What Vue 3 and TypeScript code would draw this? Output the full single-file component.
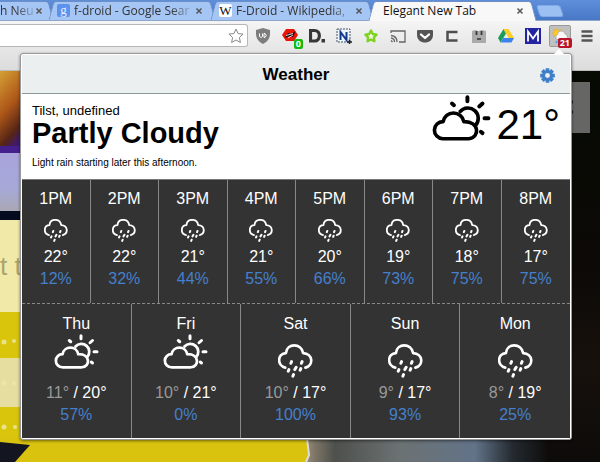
<script setup lang="ts">
interface Hour { time: string; temp: number; rain: number }
interface Day { name: string; low: number; high: number; rain: number; icon: 'sun' | 'rain' }

const tabs = [
  { title: 'h Neu', icon: '', kind: 'first' },
  { title: 'f-droid - Google Sear', icon: 'g', kind: 'google' },
  { title: 'F-Droid - Wikipedia,', icon: 'W', kind: 'wiki' },
  { title: 'Elegant New Tab', icon: '', kind: 'active' },
]
const hours: Hour[] = [
  { time: '1PM', temp: 22, rain: 12 },
  { time: '2PM', temp: 22, rain: 32 },
  { time: '3PM', temp: 21, rain: 44 },
  { time: '4PM', temp: 21, rain: 55 },
  { time: '5PM', temp: 20, rain: 66 },
  { time: '6PM', temp: 19, rain: 73 },
  { time: '7PM', temp: 18, rain: 75 },
  { time: '8PM', temp: 17, rain: 75 },
]
const days: Day[] = [
  { name: 'Thu', low: 11, high: 20, rain: 57, icon: 'sun' },
  { name: 'Fri', low: 10, high: 21, rain: 0, icon: 'sun' },
  { name: 'Sat', low: 10, high: 17, rain: 100, icon: 'rain' },
  { name: 'Sun', low: 9, high: 17, rain: 93, icon: 'rain' },
  { name: 'Mon', low: 8, high: 19, rain: 25, icon: 'rain' },
]
</script>

<template>
  <div class="browser">
    <svg width="0" height="0" class="defs" aria-hidden="true">
      <symbol id="sun" viewBox="98 134 178 140">
        <g fill="none" stroke="currentColor" stroke-width="11" stroke-linecap="round" stroke-linejoin="round">
          <path d="M130 267A26 26 0 0 1 131 215A32 32 0 0 1 194 215C242 213 244 264 209 267Z" />
          <path d="M183 184A31 31 0 0 1 230 226" />
          <path d="M205 141V153M158 160L164 165M241 169L251 160M257 205H269M246 246L251 250" stroke-width="12" />
        </g>
      </symbol>
      <symbol id="rain" viewBox="84 134 106 102">
        <g fill="none" stroke="currentColor" stroke-width="8" stroke-linecap="round" stroke-linejoin="round">
          <path d="M106 205C80 199 82 162 108 161C111 130 155 130 160 161C190 162 193 198 167 205" />
          <path d="M125 187L123 192M157 187L155 192M139 204L135 211M117 211L115 216M153 208L151 213M131 226L129 231" stroke-width="9" />
        </g>
      </symbol>
    </svg>

    <nav class="tabs" aria-label="Tabs">
      <div v-for="t in tabs" :key="t.kind" class="tab" :class="t.kind">
        <span v-if="t.icon" class="fav">{{ t.icon }}</span>
        <span class="title">{{ t.title }}</span>
        <button class="close" :aria-label="'Close ' + t.title">
          <svg viewBox="0 0 8 8"><path d="M1.500 1.500L6.500 6.500M6.500 1.500L1.500 6.500" stroke="#555" stroke-width="1.500" /></svg>
        </button>
      </div>
      <button class="newtab" aria-label="New tab"></button>
    </nav>

    <div class="toolbar">
      <div class="omnibox">
        <input aria-label="Address" />
        <button aria-label="Bookmark">
          <svg viewBox="0 0 16 16"><path d="M8 1l2.100 4.600 5 .5-3.700 3.400 1 5L8 12l-4.400 2.500 1-5L.9 6.100l5-.5z" fill="#fff" stroke="#888" /></svg>
        </button>
      </div>
      <div class="exts">
        <button aria-label="Shield">
          <svg viewBox="0 0 16 16"><path d="M8 0l7 2c.5 7-1 11-7 14C2 13 .5 9 1 2z" fill="#7d7d7d" /><path d="M4.500 5.500v3q1.500 2 3 0v-3M9 5.500v4h1q2.500-2 0-4z" fill="none" stroke="#fff" /></svg>
        </button>
        <button aria-label="Blocker" class="badged">
          <svg viewBox="0 0 16 16"><path d="M4 1h8l4 6-4 6H4L0 7z" fill="#ea1408" /><path d="M2.500 10L6 5l3 1 4.500-3-2.500 6-3-1z" fill="#111" /><path d="M4 7.500l7-2M6 10l5-3" stroke="#fff" stroke-width=".8" /></svg>
          <span class="badge green">0</span>
        </button>
        <button aria-label="Disconnect">
          <svg viewBox="0 0 16 16"><path d="M1.500 2.500h4c6.500 0 6.500 10.500 0 10.500h-4z" fill="none" stroke="#383838" stroke-width="3.200" /><rect x="12.500" y="11" width="3.500" height="3.500" fill="#383838" /></svg>
        </button>
        <button aria-label="Notes" class="note">
          <svg viewBox="0 0 16 16"><path d="M1 1h13v13H1z" fill="#eef4fb" stroke="#456" stroke-dasharray="2 1" /><path d="M4.500 12V4l6 8V4" fill="none" stroke="#123a8c" stroke-width="2" /><path d="M11 14h5M13.500 11.500v5" stroke="#222" stroke-width="1.500" /></svg>
        </button>
        <button aria-label="Favorites">
          <svg viewBox="0 0 16 16"><path d="M8 2.500l1.800 3.500 3.800.6-2.700 2.700.5 3.900L8 11.500l-3.400 1.700.5-3.900-2.700-2.700L6.200 6z" fill="#eef7dc" stroke="#7ed321" stroke-width="2.400" stroke-linejoin="round" /></svg>
        </button>
        <button aria-label="Cast">
          <svg viewBox="0 0 16 16" fill="none" stroke="#666" stroke-width="1.300"><path d="M1 5V3h14v11H9M1 7.500q6 .5 6 6.500M1 10q3.500.5 3.500 4M1 12.500l1.500 1.500" /></svg>
        </button>
        <button aria-label="Pocket">
          <svg viewBox="0 0 16 16"><path d="M0 3q0-1 1-1h14q1 0 1 1v4c0 10-16 10-16 0z" fill="#555" /><path d="M4 6.500l4 3.500 4-3.500" fill="none" stroke="#fff" stroke-width="2.300" stroke-linecap="round" stroke-linejoin="round" /></svg>
        </button>
        <button aria-label="Clipper">
          <svg viewBox="0 0 16 16"><path d="M13.500 4H3.500v8.500h10" fill="none" stroke="#4e4e4e" stroke-width="2.500" /></svg>
        </button>
        <button aria-label="Face">
          <svg viewBox="0 0 16 16"><path d="M1 3l3-1 3 1 4-1 4 1v12H1z" fill="#aaa" /><path d="M5.500 3v4M10.500 3v4M6 11h4" stroke="#333" stroke-width="1.700" /></svg>
        </button>
        <button aria-label="Drive">
          <svg viewBox="0 0 16 16"><path d="M5.500 1L0 10l2.500 4.500L8 5.500z" fill="#199e58" /><path d="M5.500 1h5L16 10h-5.200z" fill="#fbcd20" /><path d="M5.300 10H16l-2.500 4.500h-11z" fill="#3e82ed" /></svg>
        </button>
        <button aria-label="Mail">
          <svg viewBox="0 0 16 16"><path d="M0 0h16v16H0z" fill="#2424a0" /><path d="M3 13.500V3.500l5 7 5-7v10" fill="none" stroke="#fff" stroke-width="1.800" /></svg>
        </button>
        <button aria-label="Weather" class="badged pressed">
          <svg viewBox="0 0 16 16"><path d="M5 0v10M0 5h10M1.500 1.500l7 7M8.500 1.500l-7 7" stroke="#f3b010" stroke-width="1.200" /><circle cx="5" cy="5" r="3" fill="#fbc92a" /><path d="M5 11.500a3 3 0 0 1 .5-5 3.800 3.800 0 0 1 7.500-.5 3 3 0 0 1 1 5.500z" fill="#f8f8f8" stroke="#999" stroke-width=".6" /><path d="M5 13l-1 2" stroke="#48a5e8" stroke-width="2" /></svg>
          <span class="badge red">21</span>
        </button>
        <button aria-label="Menu">
          <svg viewBox="0 0 16 16"><path d="M2.500 3.500h11M2.500 8h11M2.500 12.500h11" stroke="#555" stroke-width="2.300" /></svg>
        </button>
      </div>
    </div>

    <main class="page">
      <svg class="photo" viewBox="0 71 600 391" preserveAspectRatio="xMinYMin slice" aria-hidden="true">
        <defs>
          <linearGradient id="or" x1="0" y1="0" x2=".3" y2="1"><stop offset="0" stop-color="#d5a035" /><stop offset=".5" stop-color="#ae5718" /><stop offset=".85" stop-color="#552515" /><stop offset="1" stop-color="#401a68" /></linearGradient>
          <linearGradient id="lav" x1="0" y1="0" x2="0" y2="1"><stop offset="0" stop-color="#a9a4dc" /><stop offset=".6" stop-color="#a6a9d8" /><stop offset="1" stop-color="#aaa8b4" /></linearGradient>
          <linearGradient id="floor"><stop offset="0" stop-color="#b09c80" /><stop offset=".06" stop-color="#7d7566" /><stop offset=".14" stop-color="#4d504c" /><stop offset=".4" stop-color="#6c7273" /><stop offset=".7" stop-color="#627388" /><stop offset=".85" stop-color="#242a30" /><stop offset="1" stop-color="#0d0b09" /></linearGradient>
          <linearGradient id="dark" x1="0" y1="0" x2="0" y2="1"><stop offset="0" stop-color="#060a03" /><stop offset=".5" stop-color="#0c0906" /><stop offset=".75" stop-color="#17110d" /><stop offset="1" stop-color="#0d0b09" /></linearGradient>
        </defs>
        <path d="M0 71H600V462H0z" fill="url(#dark)" />
        <path d="M0 71H22V154H0z" fill="url(#or)" />
        <path d="M0 146H22V154H0z" fill="#44208c" />
        <path d="M0 153H22V211H0z" fill="url(#lav)" />
        <path d="M0 211H22V220H0z" fill="#050c20" />
        <path d="M0 220H22V312H0z" fill="#f1e9a8" />
        <path d="M0 312H22V462H0z" fill="#d8c50c" />
        <path d="M0 358H22V407H0z" fill="#e5dea0" />
        <path d="M300 430H550V462H300z" fill="url(#floor)" />
        <path d="M0 438H307L309 455L305 462H0z" fill="#d9c30e" />
        <path d="M307 438L309 455L306 462" fill="none" stroke="#d9dce0" stroke-width="2" />
        <path d="M0 442L30 445L15 462H0z" fill="#131521" />
        <path d="M570 82H590V133H570z" fill="#666764" />
        <circle cx="571" cy="102" r="2" fill="#111" /><circle cx="571" cy="112" r="2" fill="#111" />
        <text x="0" y="275" font-size="26" font-family="Liberation Sans, sans-serif" fill="#aaa56c">t t</text>
        <g fill="#efe9a8" opacity=".8"><circle cx="4" cy="342" r="2.500" /><circle cx="14" cy="341" r="2" /><circle cx="4" cy="383" r="2.500" /><circle cx="14" cy="383" r="2" /><circle cx="4" cy="427" r="2.500" /><circle cx="15" cy="427" r="2" /></g>
      </svg>
    </main>

    <section class="popup">
      <header class="head">
        <h1>Weather</h1>
        <button class="gear" aria-label="Settings">
          <svg viewBox="-8 -8 16 16"><g stroke="#3f7fc8" stroke-width="4"><path d="M0-7.800V7.800M-7.800 0H7.800M-5.500-5.500L5.500 5.500M5.500-5.500L-5.500 5.500" /></g><circle r="5.500" fill="#3f7fc8" /><circle r="2.600" fill="#ebeff0" /></svg>
        </button>
      </header>
      <div class="current">
        <div class="summary">
          <p class="place">Tilst, undefined</p>
          <h2>Partly Cloudy</h2>
          <p class="outlook">Light rain starting later this afternoon.</p>
        </div>
        <div class="now">
          <svg class="nowicon"><use href="#sun" /></svg>
          <span>21°</span>
        </div>
      </div>
      <div class="row hourly">
        <div v-for="h in hours" :key="h.time" class="cell">
          <span>{{ h.time }}</span>
          <div class="icon"><svg><use href="#rain" /></svg></div>
          <span>{{ h.temp }}°</span>
          <span class="chance">{{ h.rain }}%</span>
        </div>
      </div>
      <div class="row daily">
        <div v-for="d in days" :key="d.name" class="cell">
          <span>{{ d.name }}</span>
          <div class="icon" :class="d.icon"><svg><use :href="'#' + d.icon" /></svg></div>
          <span><span class="low">{{ d.low }}°</span> / {{ d.high }}°</span>
          <span class="chance">{{ d.rain }}%</span>
        </div>
      </div>
    </section>
  </div>
</template>

<style>
body { margin: 0; }
</style>

<style scoped>
* { box-sizing: border-box; }
.browser { position: relative; display: flex; flex-direction: column; min-height: 100vh; overflow: hidden; font-family: "Liberation Sans", Arial, sans-serif; }
.defs { position: absolute; }
button { border: 0; padding: 0; background: none; display: block; font: inherit; }
svg { display: block; }
h1, h2, p { margin: 0; }

.tabs { display: flex; height: 21px; background: linear-gradient(#5f8fda, #4877c6); border-bottom: 1px solid #8ea6c8; }
.tab { position: relative; display: flex; align-items: center; gap: 4px; min-width: 0; height: 21px; padding: 0 10px 0 6px; font: 12px/20px "Open Sans", "Noto Sans", sans-serif; color: #333; isolation: isolate; }
.tab::before, .tab::after { content: ""; position: absolute; top: 1px; bottom: 1px; z-index: -1; background: #a5c6f4; border: 0 solid #6d8fc4; border-top-width: 1px; }
.tab::before { left: 0; right: 50%; border-left-width: 1px; border-top-left-radius: 3px; transform: skewX(-15deg); }
.tab::after { left: 40%; right: 0; border-right-width: 1px; border-top-right-radius: 3px; transform: skewX(15deg); }
.first { flex: 0 0 51px; gap: 0; padding-left: 0; padding-right: 8px; }
.first::before { left: -10px; }
.google { flex: 0 0 162px; }
.wiki { flex: 0 0 158px; padding-right: 8px; }
.active { flex: 0 0 163px; padding-left: 12px; color: #111; }
.active::before, .active::after { background: #f8f8f8; bottom: 0; }
.title { flex: 1; min-width: 0; white-space: nowrap; }
.tab:not(.active) .title { mask-image: linear-gradient(90deg, #000 calc(100% - 20px), rgba(0, 0, 0, .15)); }
.fav { width: 13px; height: 13px; border-radius: 2px; background: #5b93ec; color: #e8f0ff; font: 13px/11px "Liberation Serif", serif; text-align: center; }
.wiki .fav { background: #fff; color: #111; line-height: 14px; }
.close svg { width: 8px; height: 8px; }
.newtab { width: 24px; height: 12px; margin: 5px 0 0 4px; border: 1px solid #7fabe8; border-radius: 3px; background: #9dc0f2; transform: skewX(18deg); }

.toolbar { display: flex; align-items: center; height: 50px; padding-bottom: 21px; background: linear-gradient(#f4f4f4, #dcdcdc); border-bottom: 1px solid #bbb; }
.omnibox { flex: 1; min-width: 0; display: flex; align-items: center; height: 23px; margin-top: 1px; border: 1px solid #b6b6b6; border-left: 0; border-radius: 0 3px 3px 0; background: #fff; }
.omnibox input { flex: 1; min-width: 0; border: 0; background: none; }
.omnibox svg { width: 16px; height: 16px; margin-right: 3px; }
.exts { display: flex; align-items: center; gap: 5px; padding: 1px 2px 0 4px; }
.exts button { position: relative; display: grid; place-items: center; width: 22px; height: 22px; }
.exts svg { width: 16px; height: 16px; }
.exts .pressed { border: 1px solid #999; border-radius: 2px; background: #c0c0c0; }
.badge { position: absolute; right: -2px; bottom: -2px; padding: 0 2px; border-radius: 2px; font: bold 9px/10px "Open Sans", sans-serif; color: #fff; }
.green { background: #14b814; }
.red { background: #b8142c; }

.page { position: relative; flex: 1; background: #0a0a07; }
.photo { position: absolute; inset: 0; width: 100%; height: 100%; }

.popup { position: absolute; top: 53px; left: 20px; right: 28px; border: 1px solid #999; border-radius: 3px; padding: 1px; background: #fff; box-shadow: 0 1px 3px rgba(0, 0, 0, .5); color: #000; }
.popup::before { content: ""; position: absolute; top: -5px; right: 6px; border: 6px solid transparent; border-top: 0; border-bottom-color: #fff; }
.head { display: grid; grid-template-columns: 1fr auto 1fr; align-items: center; height: 39px; padding-top: 2px; background: #ebeff0; border-bottom: 1px solid #8f9898; }
h1 { grid-column: 2; font-size: 17px; line-height: 20px; }
.gear { justify-self: end; margin-right: 15px; }
.gear svg { width: 15px; height: 15px; }
.current { display: flex; justify-content: space-between; height: 85px; padding: 0 10px; }
.summary { padding-top: 9px; }
.place { font-size: 13px; line-height: 16px; }
h2 { font-size: 29px; line-height: 28px; }
.outlook { font-size: 10px; line-height: 12px; margin-top: 10px; }
.now { display: flex; gap: 5px; font-size: 42px; line-height: 48px; }
.now span { padding-top: 7px; }
.nowicon { width: 59px; height: 46px; margin-top: 1px; }
.row { display: grid; background: #333; color: #fff; font-size: 16px; line-height: 22px; text-align: center; }
.hourly { grid-template-columns: repeat(8, 1fr); border-top: 1px solid #777; border-bottom: 1px dashed #888; }
.daily { grid-template-columns: repeat(5, 1fr); }
.cell { display: flex; flex-direction: column; padding: 8px 0 13px; border-right: 1px solid #888; }
.daily .cell { padding: 9px 0 12px; }
.cell:last-child { border-right: 0; }
.icon { display: flex; justify-content: center; height: 36px; padding-top: 9px; }
.icon svg { width: 24px; height: 23px; }
.daily .icon { height: 47px; }
.rain svg { width: 35px; height: 34px; }
.daily .sun { padding-top: 0; }
.sun svg { width: 45px; height: 35px; margin-top: -1px; }
.chance { color: #4580cc; }
.low { color: #999; }
</style>
